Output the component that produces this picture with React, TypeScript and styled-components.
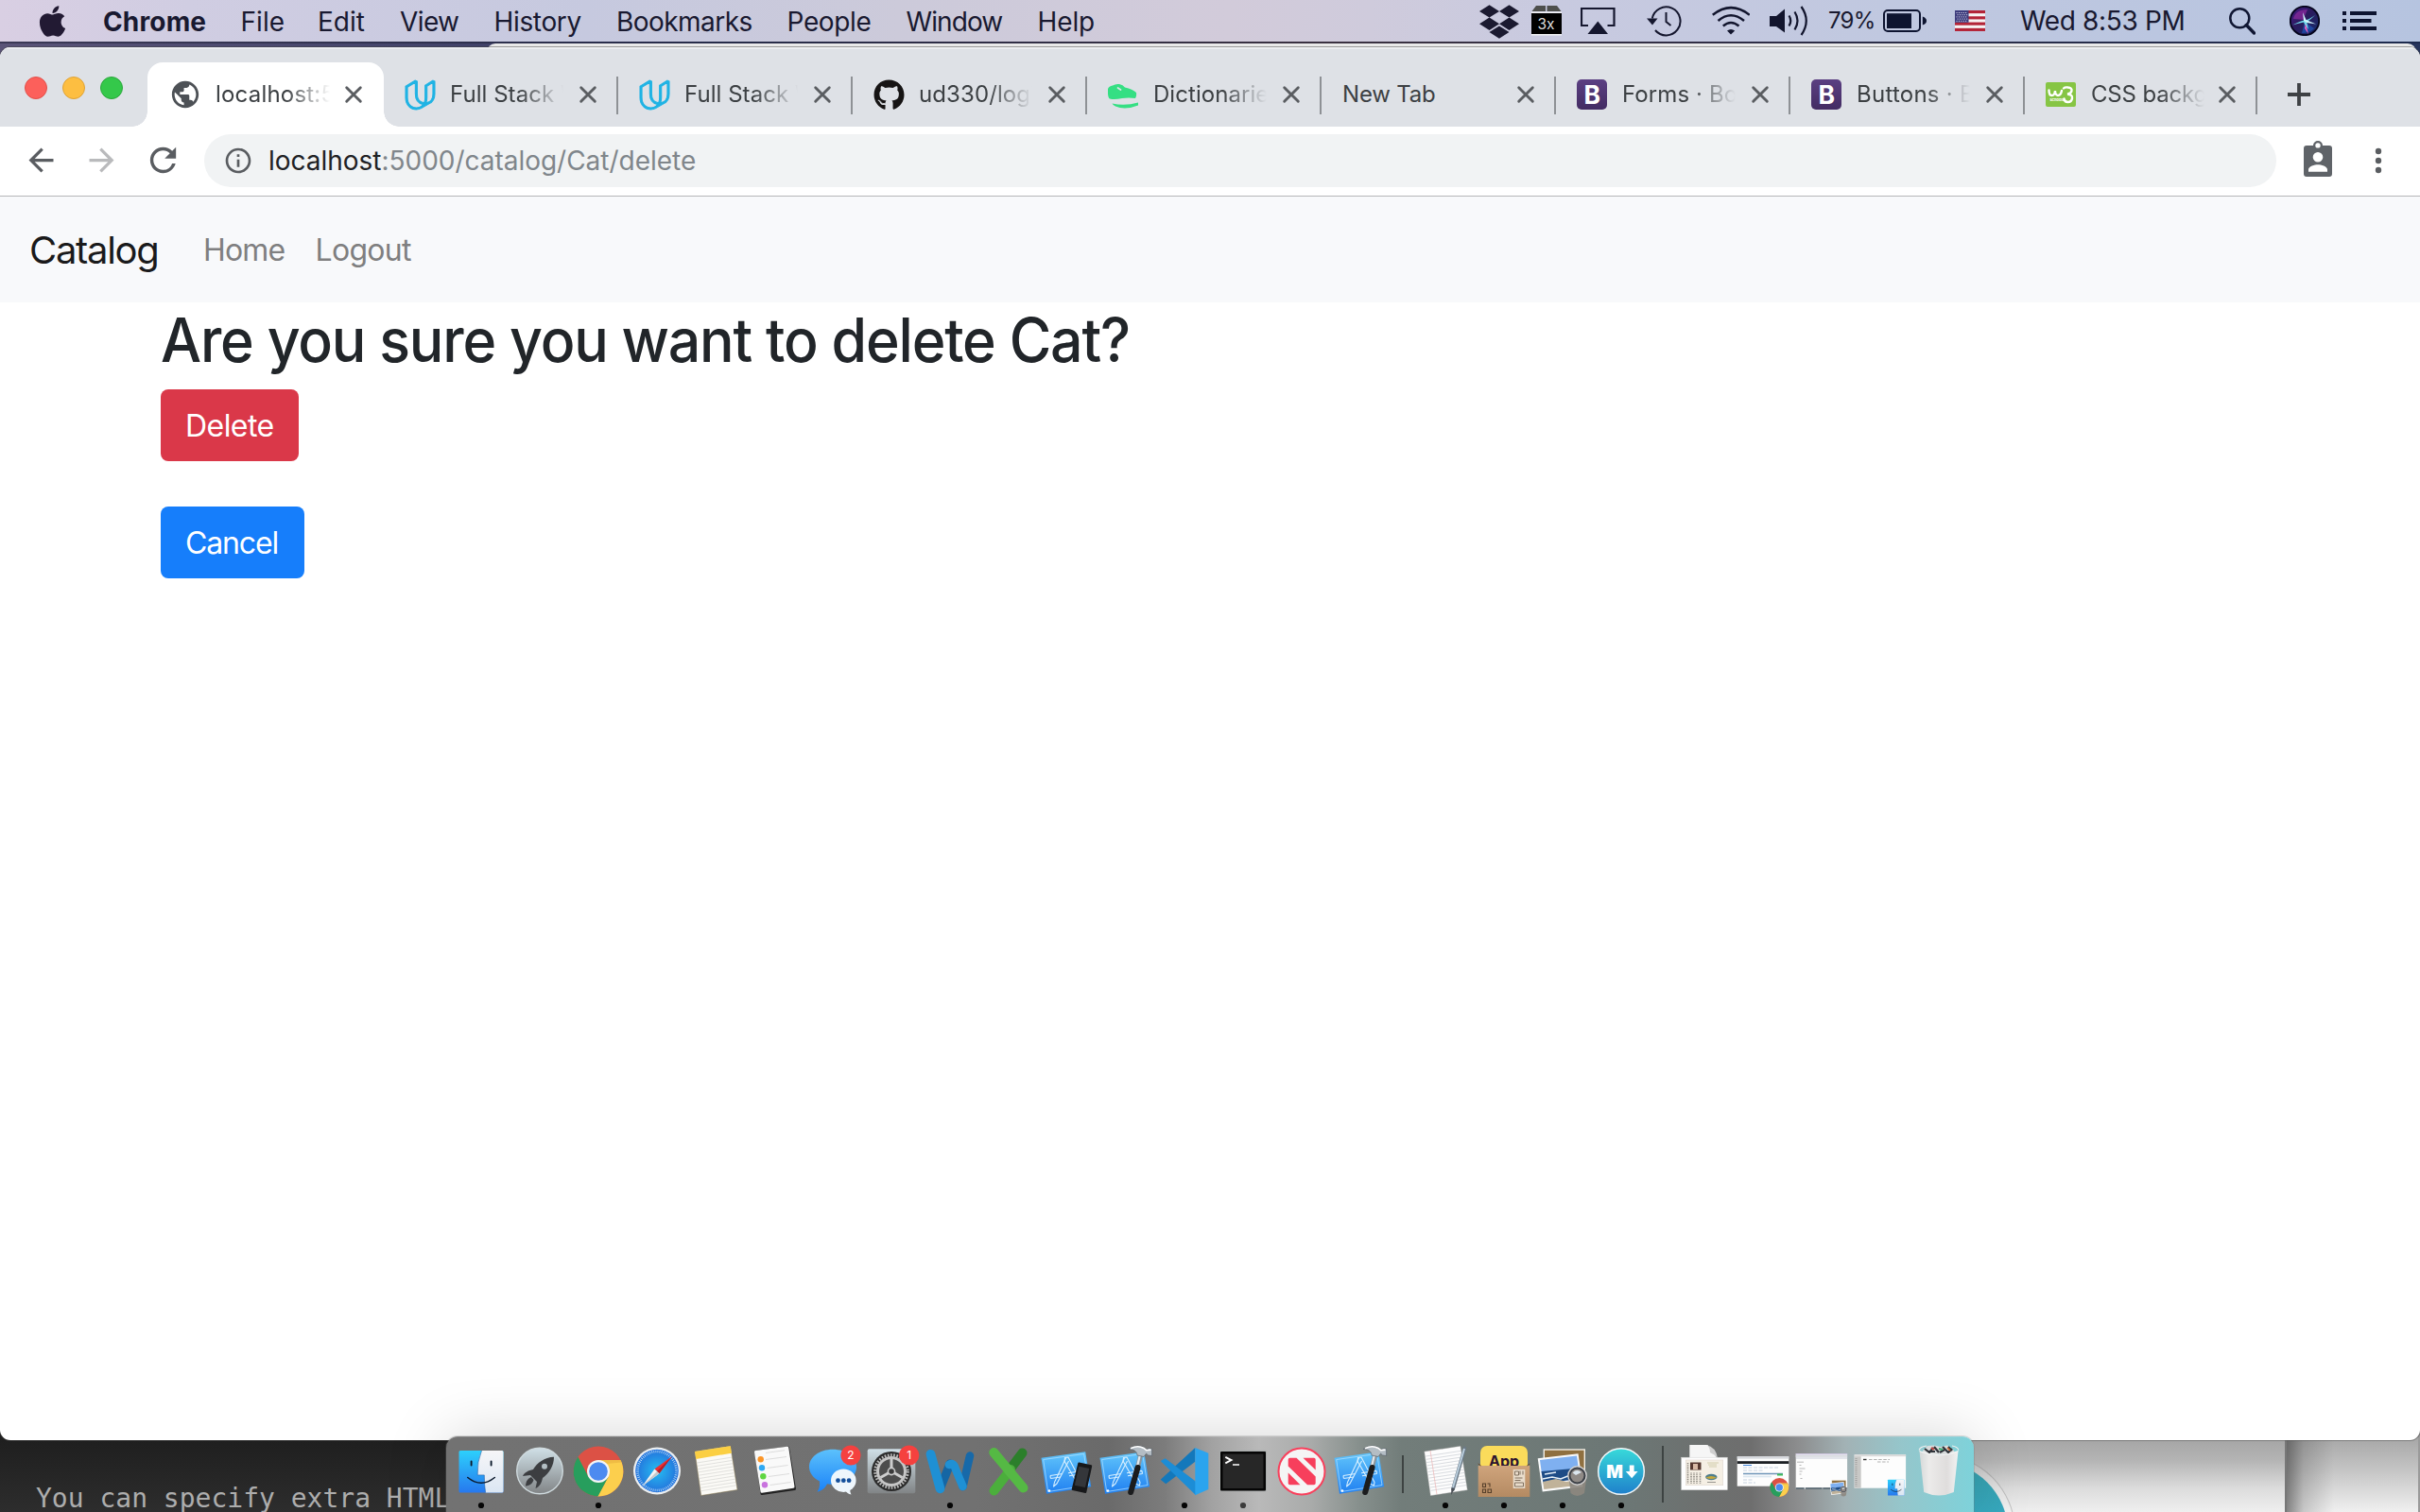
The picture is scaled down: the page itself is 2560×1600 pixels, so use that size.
import React from 'react';
import styled, { createGlobalStyle } from 'styled-components';
import { FaApple, FaDropbox, FaGithub } from 'react-icons/fa';
import { MdArrowBack, MdArrowForward, MdInfoOutline, MdPublic, MdRefresh } from 'react-icons/md';
import { SiUdacity } from 'react-icons/si';

const GlobalStyle = createGlobalStyle`
  *, *::before, *::after { box-sizing: border-box; }
  html, body { margin: 0; padding: 0; overflow: hidden; }
  body { font-family: Inter, "Liberation Sans", sans-serif; }
  svg { display: block; flex: none; }
`;

/* ---------- Desktop ---------- */

const Desktop = styled.div`
  position: relative;
  width: 2560px;
  height: 1600px;
  overflow: hidden;
  display: flex;
  flex-direction: column;
  background: linear-gradient(90deg, #5a5478 0, #3c3f66 600px, #4a3f58 1400px, #26345c 2560px);
`;

/* ---------- Menu bar ---------- */

const MenuBar = styled.header`
  flex: none;
  height: 44px;
  display: flex;
  align-items: center;
  justify-content: space-between;
  padding: 0 46px 0 43px;
  color: #191930;
  font-size: 28px;
  line-height: 44px;
  background: linear-gradient(90deg, #d9cfe3 0, #d0cde2 200px, #c6c9df 620px, #cccada 950px, #d2cbda 1300px, #cfcbdc 1450px, #c8cae0 1650px, #c0c8e0 2000px, #b6c4e0 2560px);
`;

const MenuGroup = styled.div`
  display: flex;
  align-items: center;
`;

const AppleSlot = styled.div`
  width: 66px;
  svg { margin-left: -6px; }
`;

const DropboxSlot = styled.div`
  width: 38px;
  svg { margin: 1px -2px 0; }
`;

const MenuItem = styled.span<{ $w: number; $ls?: number; $bold?: boolean }>`
  width: ${p => p.$w}px;
  padding-top: 1px;
  letter-spacing: ${p => p.$ls ?? 0}px;
  font-weight: ${p => (p.$bold ? 700 : 400)};
  white-space: nowrap;
`;

const StatusItem = styled.div<{ $w: number; $gap?: number; $size?: number; $ls?: number }>`
  width: ${p => p.$w}px;
  margin-left: ${p => p.$gap ?? 0}px;
  font-size: ${p => p.$size ?? 28}px;
  letter-spacing: ${p => p.$ls ?? 0}px;
  white-space: nowrap;
`;

/* ---------- Windows ---------- */

const BackWindowEdge = styled.div`
  position: absolute;
  left: 515px;
  top: 46px;
  width: 2041px;
  height: 30px;
  border-radius: 9px 9px 0 0;
  background: #e9e9e9;
`;

const MenuShade = styled.div`
  position: absolute;
  left: 0;
  top: 44px;
  width: 2560px;
  height: 2px;
  background: linear-gradient(90deg, #3b3956, #262b49 30%, #3a3040 55%, #1d2a4e);
`;

const BrowserWindow = styled.main`
  position: relative;
  z-index: 1;
  flex: none;
  margin-top: 6px;
  height: 1474px;
  display: flex;
  flex-direction: column;
  border-radius: 11px;
  overflow: hidden;
  background: #fff;
  box-shadow: 0 0 0 1px rgba(60, 60, 60, 0.45);
`;

const TabStrip = styled.div`
  flex: none;
  height: 84px;
  display: flex;
  align-items: flex-end;
  background: #dee1e6;
  box-shadow: inset 0 2px 0 #eceef1;
`;

const TrafficLights = styled.div`
  width: 156px;
  height: 84px;
  padding: 31px 0 0 26px;
  display: flex;
  gap: 16px;
`;

const Light = styled.i<{ $c: string; $b: string }>`
  width: 24px;
  height: 24px;
  border-radius: 50%;
  background: ${p => p.$c};
  border: 1px solid ${p => p.$b};
`;

const Tab = styled.div<{ $active?: boolean; $w?: number }>`
  position: relative;
  width: ${p => p.$w ?? 248}px;
  height: 68px;
  display: flex;
  align-items: center;
  padding-left: ${p => (p.$active ? 24 : 22)}px;
  color: #3c4043;
  background: ${p => (p.$active ? '#fff' : 'transparent')};
  border-radius: 16px 16px 0 0;

  ${p =>
    p.$active &&
    `
    &::before, &::after {
      content: '';
      position: absolute;
      bottom: 0;
      width: 16px;
      height: 16px;
    }
    &::before { left: -16px; background: radial-gradient(circle at 0 0, transparent 15.5px, #fff 16px); }
    &::after { right: -16px; background: radial-gradient(circle at 100% 0, transparent 15.5px, #fff 16px); }
  `}
`;

const Favicon = styled.span`
  width: 32px;
  height: 32px;
  margin-right: 16px;
  display: flex;
  align-items: center;
  justify-content: center;
`;

const TabTitle = styled.span<{ $ls?: number; $fade?: boolean; $w: number }>`
  width: ${p => p.$w}px;
  overflow: hidden;
  white-space: nowrap;
  font-size: 24px;
  line-height: 34px;
  letter-spacing: ${p => p.$ls ?? 0}px;
  ${p => p.$fade && 'mask-image: linear-gradient(90deg, #000 calc(100% - 48px), transparent calc(100% - 1px));'}
`;

const CloseSlot = styled.span`
  margin-left: auto;
  width: 20px;
  margin-right: 22px;
`;

const TabDivider = styled.i`
  position: absolute;
  right: 0;
  top: 15px;
  width: 2px;
  height: 40px;
  background: #8e9195;
`;

const NewTabSlot = styled.div`
  height: 68px;
  padding-left: 32px;
  display: flex;
  align-items: center;
`;

const Toolbar = styled.div`
  flex: none;
  height: 74px;
  display: flex;
  align-items: center;
  padding: 0 37px 2px 24px;
  background: #fff;
  border-bottom: 1px solid #b6b6b8;
  color: #5a5d61;
`;

const ToolButton = styled.span<{ $dim?: boolean }>`
  width: 64px;
  display: flex;
  color: ${p => (p.$dim ? '#b9babc' : '#5a5d61')};
`;

const Omnibox = styled.div`
  flex: none;
  width: 2192px;
  height: 56px;
  display: flex;
  align-items: center;
  padding-left: 20px;
  border-radius: 28px;
  background: #f1f3f4;
  color: #80868b;
  font-size: 28px;
  line-height: 56px;
`;

const Url = styled.span`
  margin-left: 16px;
  white-space: nowrap;
  letter-spacing: -0.02px;
  b { font-weight: 400; color: #202124; }
`;

const ToolbarEnd = styled.div`
  flex: 1;
  display: flex;
  align-items: center;
  justify-content: space-between;
  padding-left: 29px;
`;

/* ---------- Page ---------- */

const Navbar = styled.nav`
  flex: none;
  height: 112px;
  display: flex;
  align-items: center;
  padding-left: 31px;
  background: #f8f9fb;
`;

const Brand = styled.a`
  width: 184px;
  padding-top: 1px;
  font-size: 40px;
  line-height: 60px;
  letter-spacing: -1.3px;
  color: #1a1a1b;
`;

const NavLink = styled.a<{ $w: number; $ls: number }>`
  width: ${p => p.$w}px;
  padding-top: 2px;
  font-size: 32px;
  line-height: 48px;
  letter-spacing: ${p => p.$ls}px;
  color: #7f7f80;
`;

const Container = styled.section`
  display: flex;
  flex-direction: column;
  align-items: flex-start;
  padding-left: 170px;
`;

const Heading = styled.h1`
  margin: 0 0 14px;
  padding-top: 2px;
  font-size: 64px;
  line-height: 76px;
  font-weight: 500;
  letter-spacing: -1.24px;
  transform: scaleX(0.95);
  transform-origin: 0 0;
  white-space: nowrap;
  color: #212529;
`;

const Button = styled.button<{ $color: string; $w: number; $ls: number }>`
  width: ${p => p.$w}px;
  height: 76px;
  margin: 0 0 48px;
  padding: 1px 0 0 26px;
  border: 0;
  border-radius: 8px;
  background: ${p => p.$color};
  color: #fff;
  font: 400 32px/75px Inter, sans-serif;
  letter-spacing: ${p => p.$ls}px;
  text-align: left;
`;

/* ---------- Windows below the browser ---------- */

const LowerLeft = styled.div`
  position: absolute;
  left: 0;
  top: 1500px;
  width: 2100px;
  height: 100px;
  padding: 67px 0 0 38px;
  overflow: hidden;
  background: linear-gradient(180deg, #1f1f1f 24px, #2d2d2d 100px);
  color: #adadad;
  font: 28px/38px "DejaVu Sans Mono", monospace;
  white-space: nowrap;
`;

const LowerRight = styled.div`
  position: absolute;
  left: 2080px;
  top: 1500px;
  width: 337px;
  height: 100px;
  overflow: hidden;
  background: linear-gradient(180deg, #a6a6a6 24px, #b4b4b4 45px, #dcdcdc 75px, #efefef 100px);
`;

const TealDisc = styled.div`
  position: absolute;
  left: -112px;
  top: 39px;
  width: 164px;
  height: 164px;
  border-radius: 50%;
  border: 1px solid rgba(110, 110, 110, 0.35);
  padding: 7px;
  background: rgba(255, 255, 255, 0.2);
  &::before {
    content: '';
    display: block;
    width: 148px;
    height: 148px;
    border-radius: 50%;
    background: linear-gradient(180deg, #35a0ac, #37a9c0 40%);
  }
`;

const FarRight = styled.div`
  position: absolute;
  left: 2417px;
  top: 1500px;
  width: 143px;
  height: 100px;
  border-left: 2px solid #777;
  border-right: 2px solid #9a9a9a;
  background:
    linear-gradient(90deg, rgba(60, 60, 60, 0.6), rgba(60, 60, 60, 0.22) 18px, transparent 50px),
    linear-gradient(180deg, #a9a9a9 24px, #c4c4c4 55px, #f0f0f0 100px);
`;

/* ---------- Dock ---------- */

const DockBar = styled.footer`
  position: absolute;
  z-index: 2;
  left: 472px;
  top: 1520px;
  width: 1616px;
  height: 80px;
  padding: 0 6px;
  display: flex;
  border-radius: 12px 12px 0 0;
  background: linear-gradient(90deg, #727272 0, #717171 560px, #6a6a6a 700px, #7c7c7c 760px, #a2a2a2 810px, #b9b9b9 860px, #a9abaa 915px, #87908d 965px, #727d7a 1010px, #6c7775 1250px, #6d706f 1330px, #6e6e6e 1380px, #8c8d8e 1430px, #a2b2b5 1480px, #95c6cb 1540px, #7ed2da 1616px);
  box-shadow: 0 0 0 1px rgba(120, 120, 120, 0.25), 0 0 64px rgba(0, 0, 0, 0.17), inset 0 1px 0 rgba(255, 255, 255, 0.12);
`;

const Divider = styled.i<{ $h: number; $w: number }>`
  width: ${p => p.$w}px;
  height: 80px;
  display: flex;
  align-items: center;
  justify-content: center;
  &::before {
    content: '';
    width: 2px;
    height: ${p => p.$h}px;
    background: #3d4342;
  }
`;

/* Every dock tile draws around its own centre. */
function Tile({ children, running, soft }: { children: React.ReactNode; running?: boolean; soft?: boolean }) {
  return (
    <svg width="62" height="80" viewBox="-31 -37 62 80">
      {children}
      {running && <circle cx="0" cy="36" r="3.1" fill={soft ? '#3c3c3c' : '#050505'} />}
    </svg>
  );
}

const Finder = () => (
  <g>
    <rect x="-23.5" y="-22" width="47" height="44.5" rx="1.5" fill="url(#finderBlue)" />
    <path d="M.5-22H22a1.500 1.500 0 0 1 1.500 1.500V21a1.500 1.500 0 0 1-1.500 1.500H4.600Q3.200 14 3.300 3.900H-3.800Q-4.500-10 .5-22Z" fill="url(#finderWhite)" />
    <path d="M.5-22Q-4.500-10-3.800 3.900H3.300Q3.200 14 4.600 22.500" fill="none" stroke="#1b5ca8" strokeWidth=".6" />
    <path d="M-10.400-10.500v4M10.600-10.500v4" stroke="#0c1a2c" strokeWidth="1.900" strokeLinecap="round" />
    <path d="M-14.200 6.500Q0 18 14.300 6.500" fill="none" stroke="#0c1a2c" strokeWidth="1.600" strokeLinecap="round" />
  </g>
);

const Launchpad = () => (
  <g>
    <circle cy="-.5" r="24.300" fill="url(#silver)" stroke="#cfdade" strokeWidth="1.400" />
    <path d="M15-15.300C5-15-3-9-7-2-12-1-16 1-18 5l8-1 7 7-1.500 7C0 16 2 12 3 7 10 2 15-6 15-15.300Z" fill="#3c3e41" />
    <path d="M-15 15.500C-14.500 10-13 8-9 6l2.500 3C-8 13-10 15-15 15.500Z" fill="#3c3e41" />
    <circle cx="5" cy="-5.300" r="3" fill="#b3bec3" />
  </g>
);

const ChromeMark = () => (
  <g>
    <circle r="26.400" fill="#dc5145" />
    <path d="M0-12H23.500A26.400 26.400 0 0 1-1 26.400L10.400 6Z" fill="#fccf4d" />
    <path d="M-21.500-15.300A26.400 26.400 0 0 0-.500 26.400L10.400 6H-10.400Z" fill="#279e5d" />
    <path d="M0-12H23.500L24.500-9.500 8-8Z" fill="#e3a93b" opacity=".5" />
    <circle r="12" fill="#f5f5f5" />
    <circle r="9.800" fill="#4c8bf0" />
  </g>
);

const Safari = () => (
  <g>
    <circle cy="-.5" r="25" fill="#eceff1" />
    <circle cy="-.5" r="22.800" fill="url(#safariBlue)" />
    <circle cy="-.5" r="20.500" fill="none" stroke="#cfe9fb" strokeWidth="2.600" strokeDasharray=".7 1.400" />
    <path d="M16-16 2.400 2.200-2.600-2.400Z" fill="#ee2f33" />
    <path d="M-15.500 15.500-2.600-2.400 2.400 2.200Z" fill="#f4f4f4" />
    <path d="M16-16 0 0 2.400 2.200Z" fill="#b51f27" />
    <path d="M-15.500 15.500 0 0 2.400 2.200Z" fill="#c5c9cc" />
  </g>
);

const lines = (n: number, x1: number, y1: number, w: number, rise: number, dx: number, dy: number) =>
  Array.from({ length: n }, (_, i) => `M${x1 + i * dx} ${y1 + i * dy}l${w} ${-rise}`).join('');

const Notes = () => (
  <g>
    <path d="M-22-21 15.700-26.800 23 19.500-15.300 25.500Z" fill="#fbfaf6" stroke="#8a7a50" strokeWidth=".5" />
    <path d="M-22-21 15.700-26.800 16.900-19.300-20.700-13Z" fill="#fbcf42" />
    <path d={lines(10, -19.800, -9, 37, 5.900, 0.500, 3.300)} stroke="#d6d6d2" strokeWidth=".7" />
  </g>
);

const Reminders = () => (
  <g>
    <path d="M-19-20.500 14.500-24.800 21.500 18.500-13 23.500Z" fill="#222" stroke="#222" strokeWidth="3" strokeLinejoin="round" />
    <path d="M-19.500-20.500 13.800-24.800 20 16.300-13 21.300Z" fill="#f9f9f9" stroke="#f9f9f9" strokeWidth="3" strokeLinejoin="round" />
    <circle cx="-14.300" cy="-12.700" r="3.200" fill="#fb9526" />
    <circle cx="-13" cy="-3.700" r="3.200" fill="#2fa9f3" />
    <circle cx="-11.700" cy="5.300" r="3.200" fill="#5fd642" />
    <circle cx="-10" cy="14.300" r="3.200" fill="#c973de" />
    <path d="M-9-19.500 11-22.300M-9-12.500l22-3M-7.500-3.500l22-3M-6 5.500l22-3M-4.500 14.500l22-3" stroke="#d4d4d4" strokeWidth=".8" />
  </g>
);

const Badge = ({ x, children }: { x: number; children: string }) => (
  <g>
    <circle cx={x} cy="-17" r="10.600" fill="#f5413f" />
    <text x={x} y="-12.700" fill="#fff" fontSize="12" fontFamily="Inter, sans-serif" textAnchor="middle">{children}</text>
  </g>
);

const Messages = () => (
  <g>
    <path d="M0-23.300C14.500-23.300 25-15 25-4.700S14.500 13.700 0 13.700c-2 0-4 0-6-.5-2 4.500-6 7.500-10.500 8.300 2-2.500 3-6 2.500-11C-21 7-25 1.500-25-4.700-25-15-14.500-23.300 0-23.300Z" fill="url(#bubble)" />
    <ellipse cx="11.300" cy="9.700" rx="13.300" ry="12.200" fill="#eef6fc" />
    <path d="M13 20c1.500 2.500 3.500 4 6.500 4.500-1-2-1.500-4-1-6Z" fill="#eef6fc" />
    <g fill="#15509c"><circle cx="5.500" cy="9.700" r="2.400" /><circle cx="11.300" cy="9.700" r="2.400" /><circle cx="17.100" cy="9.700" r="2.400" /></g>
    <Badge x={19}>2</Badge>
  </g>
);

const SystemPreferences = () => (
  <g>
    <rect x="-25.300" y="-23.700" width="50.600" height="47" rx="2" fill="url(#silver)" />
    <circle r="21" fill="#2b2b2b" />
    <circle r="17.300" fill="none" stroke="#b9b9b9" strokeWidth="3" strokeDasharray="1.700 1.500" />
    <circle r="14.500" fill="#4d4d4d" stroke="#c6c6c6" strokeWidth="3" />
    <path d="M0 0V-13M0 0 11.500 6.500M0 0-11.500 6.500" stroke="#cdcdcd" strokeWidth="3" />
    <circle r="3.600" fill="#3a3a3a" stroke="#cdcdcd" strokeWidth="1.600" />
    <Badge x={18.700}>1</Badge>
  </g>
);

const Word = () => (
  <g fill="none" strokeLinecap="round" strokeLinejoin="round">
    <path d="M21-16.500 13.500 16" stroke="#1769a9" strokeWidth="8.500" />
    <path d="M-10.500 18 0-8" stroke="#1566a4" strokeWidth="9" />
    <path d="M-20.500-18.200-10.500 18.300" stroke="#1f90d4" strokeWidth="9.800" />
    <path d="M-1-7Q4-10 6-2L13.500 16" stroke="#1f90d4" strokeWidth="8.500" />
  </g>
);

const Excel = () => (
  <g fill="none" strokeLinecap="round">
    <path d="M14.500-19.500 2-3" stroke="#2c7f2b" strokeWidth="10" />
    <path d="M-15.500 20.500 2-2" stroke="#4bae3c" strokeWidth="10" />
    <path d="M-15.700-20 15.500 17.500" stroke="#55b944" strokeWidth="10" />
  </g>
);

const Blueprint = () => (
  <g>
    <path d="M-27.500-14.300 19.200-20.700 25.200 16.300-22 23.800Z" fill="url(#blueprint)" />
    <path d="M-25.300-12.500 17.600-18.500 23 14.500-20.300 21.500Z" fill="none" stroke="#b5e2ff" strokeWidth=".7" />
    <g fill="none" stroke="#d8f0ff" strokeWidth="1.100" strokeLinejoin="round">
      <path d="M-2.500-14.500 1-15 15 11.500 14.500 15 11 13.500-3-11Z" />
      <path d="M-1.500-14-13.500 11.500-14.500 16-11 13 1.500-11" />
      <path d="M-18 4.500-5 2.500M1 1.800 17-.600M-17.600 7.500-7 6M2 4.700 17.500 2.500M-18 4.500l.4 3M17-.6l.5 3.100" />
    </g>
    <circle cx="-19" cy="20.500" r="1.300" fill="#fff" />
  </g>
);

const Simulator = () => (
  <g>
    <Blueprint />
    <path d="M12.300-8.500 25.200-5.700 19.300 22 5.700 19Z" fill="#17181a" stroke="#17181a" strokeWidth="2" strokeLinejoin="round" />
    <path d="M12.300-5.300 23.300-2.900 19 17 7.800 14.700Z" fill="#34363a" />
  </g>
);

const Xcode = () => (
  <g>
    <Blueprint />
    <path d="M15.800-18 12.500-4" stroke="#8a949b" strokeWidth="5" />
    <path d="M15-18 12-5" stroke="#e2e8ec" strokeWidth="2.200" />
    <path d="M12.500-4 5.200 22" stroke="#1b1c1e" strokeWidth="6" strokeLinecap="round" />
    <path d="M3-23.500C8-27.300 15-27.800 19.500-25.300l2.500 2.300 2-1.200 3.600.5V-16.500l-4-.5-2-1.800-2.600 3.300-7-1.500C11.500-21.500 8.500-23.300 3-23.500Z" fill="#b4bdc4" stroke="#59626a" strokeWidth=".7" />
    <path d="M5-24.200C10-26.700 15-26.700 19-24.500l2.700 2.200 4.800-.6" fill="none" stroke="#fff" strokeWidth="1.600" />
  </g>
);

const VSCode = () => (
  <g>
    <path d="M11.300-25-25.300 8.700-19.700 13.300 11.300-10.300Z" fill="#1378bb" />
    <path d="M-25.300-11-20.300-13.700 12 10.700V25.200Z" fill="#1c8dd6" />
    <path d="M11.300-25 25.300-19.300V19L11.300 25.200Z" fill="#2ba4ee" />
  </g>
);

const TerminalMark = () => (
  <g>
    <rect x="-25" y="-22.200" width="50" height="43.500" rx="2" fill="#a9adac" />
    <rect x="-24" y="-21" width="48" height="41.500" rx="1" fill="#050505" />
    <rect x="-21.500" y="-18.500" width="43" height="36.500" fill="#272727" />
    <path d="M-18.700-15.200l6.200 3.300-6.200 3.300" fill="none" stroke="#fff" strokeWidth="1.900" />
    <path d="M-11-7h7" stroke="#fff" strokeWidth="1.500" />
  </g>
);

const News = () => (
  <g>
    <circle r="24.500" fill="#f5f5f5" stroke="#f8405c" strokeWidth="2" />
    <path d="M-14.300-12.500Q-14.300-14.300-12.500-14.300H-5.500L14.700 5.500V12.500Q14.700 14.300 13 14.300H6L-14.300-5.500ZM1.500-14.300H13Q14.700-14.300 14.700-12.500V-1.500ZM-14.300 1.500V12.500Q-14.300 14.300-12.500 14.300H-1.500Z" fill="#f73f5c" />
  </g>
);

const TextEdit = () => (
  <g>
    <path d="M-22.300-21 16-26.800 23.300 19.700-15.700 25.700Z" fill="#fdfdfd" stroke="#999" strokeWidth=".4" />
    <path d={lines(12, -20.800, -16, 37.500, 5.700, 0.500, 3.300)} stroke="#c8cdd2" strokeWidth=".7" />
    <path d="M-16-22-9 24.500" stroke="#eba7a7" strokeWidth=".6" />
    <path d="M20.500-24.500 8 19" stroke="#6c7a86" strokeWidth="3.800" strokeLinecap="round" />
    <path d="M20-24 8 17" stroke="#b9cddc" strokeWidth="2" />
    <path d="M6.500 17.500l3.500 1L6 25Z" fill="#4a4f55" />
  </g>
);

const AppBox = () => (
  <g>
    <rect x="-25" y="-27" width="50" height="30" rx="7" fill="#fadb5b" />
    <text x="0" y="-4.700" textAnchor="middle" fontFamily="Inter, sans-serif" fontWeight="700" fontSize="16" fill="#2b1430">App</text>
    <path d="M-27.300-6H27.300V27H-27.300Z" fill="url(#carton)" />
    <path d="M-27.300-8l3 2M27.300-8l-3 2" stroke="#6d4b2b" strokeWidth="1" />
    <rect x="9.700" y="-2" width="12.600" height="20" fill="#e9dccb" />
    <path d="M11.500 0h4v4h-4ZM17-.5v4M20-.5v4M11.500 7h8M11.500 9.500h6M11.500 12h9v4h-9Z" stroke="#756555" strokeWidth=".9" fill="none" />
    <path d="M-22.500 13h3v3.500h-3ZM-17.500 13h2.500v3.500M-22.500 19h3v3.500h-3ZM-17 19h3.500v3.500H-17Z" stroke="#57402b" strokeWidth="1.100" fill="none" />
  </g>
);

const PreviewMark = () => (
  <g>
    <rect x="-19.700" y="-23" width="43" height="33" fill="#8f7040" stroke="#f3efe6" strokeWidth="1.400" />
    <path d="M-26.300-13.700 16.500-18.700 21.500 16.300-21.300 21.500Z" fill="#fafafa" />
    <path d="M-24-11.900 15-16.500 17-2-22.200 1.800Z" fill="#7fb0f0" />
    <path d="M-22.500 0 16.800-3.500 18.600 8-20.500 12.500Z" fill="#1e4c86" />
    <path d="M-20.900 11-7 8 4 11 18.600 8 19.500 14.500-19.700 19Z" fill="#c0b299" />
    <path d="M-21 8l10-2 9 2 10-4M-19 3l12-2" stroke="#e6f0f8" strokeWidth="1.600" fill="none" />
    <path d="M6.500 6 8.500 23Q15.300 29 23 23L25.500 6Z" fill="#8d8780" opacity=".9" />
    <circle cx="15.500" cy="4.500" r="9.700" fill="#3b3f46" stroke="#d0d0d0" strokeWidth="1.400" />
    <circle cx="15.500" cy="4.500" r="7" fill="#8f8a86" />
    <path d="M10.500 1.500Q15-3 20 1L14 4Z" fill="#dbe6ee" />
  </g>
);

const MacDown = () => (
  <g>
    <circle r="24.300" fill="url(#macdown)" stroke="#f4f8f9" strokeWidth="1.500" />
    <text x="-6.900" y="6.900" textAnchor="middle" fontFamily="Inter, sans-serif" fontWeight="900" fontSize="18.500" fill="#fff">M</text>
    <path d="M8.800-6.500h4.800V0h4L11.200 7.300 4.800 0h4Z" fill="#fff" />
  </g>
);

const Documents = () => (
  <g>
    <path d="M-15.700-28H3.500L13.700-14H-15.700Z" fill="#f6f6f6" />
    <path d="M2-28Q6-26 6-20 11-18 14-14Q12-26 2-28Z" fill="#cfcfcf" />
    <rect x="-24.300" y="-14.800" width="48.600" height="34.500" fill="#fefefe" stroke="#d0d0d0" strokeWidth=".5" />
    <rect x="-19.700" y="-12" width="39.400" height="26.700" fill="#f5efe4" stroke="#e0d5d0" strokeWidth=".6" />
    <rect x="-15" y="-9.500" width="11.500" height="8" fill="#57382f" />
    <rect x="-12" y="-8" width="5" height="6" fill="#d9b9a4" />
    <path d="M-17.500-9V13M-14 1.500v12M-11 1.500v12M-8 1.500v12M-4.500 1.500v12" stroke="#8b8780" strokeWidth="1.600" strokeDasharray="1 .7" />
    <path d="M3-9H15M4-7H13M5-5H13" stroke="#c9c59c" strokeWidth=".8" />
    <ellipse cx="7.300" cy="6" rx="6.200" ry="3.300" fill="#4d7d8d" />
    <path d="M1.500 6.500Q7 3.500 13 6.500 7 9.500 1.500 6.500Z" fill="#c7a83a" />
    <path d="M3 11.500H12" stroke="#8d8a84" strokeWidth=".9" />
  </g>
);

const MiniBrowser = () => (
  <g>
    <rect x="-27.300" y="-15.800" width="54.600" height="31.500" fill="#fdfdfd" />
    <rect x="-27.300" y="-15.800" width="54.600" height="2.400" fill="#d5d8dd" />
    <rect x="-27.300" y="-10.800" width="54.600" height="2.800" fill="#1d2024" />
    <path d="M-21-6.500h9" stroke="#3f82d8" strokeWidth="1" />
    <path d="M-21-4h38M-21-1h22M-21 9h10M-21 12h13" stroke="#b9c6d8" strokeWidth=".8" strokeDasharray="4 1.500" />
    <path d="M-21 2.500h42" stroke="#6f95b8" strokeWidth="1.400" />
    <rect x="15" y="2.500" width="6" height="2" fill="#3dbb57" />
    <path d="M-21 5.500h30" stroke="#dbe7f0" strokeWidth="1.600" />
    <g transform="translate(17.300 17) scale(.375)"><ChromeMark /></g>
  </g>
);

const MiniPreview = () => (
  <g>
    <rect x="-27.300" y="-18.800" width="54.400" height="37.500" fill="#fdfdfd" />
    <rect x="-27.300" y="-18.800" width="54.400" height="1.200" fill="#c9bfdc" />
    <rect x="-27.300" y="-17.200" width="54.400" height="2" fill="#d8dbe0" />
    <path d="M-27-14h54" stroke="#b2b7c8" strokeWidth=".7" />
    <path d="M-26-9.800h7M-23.500-6.500h2M-23.500-3h6M-23.500 0h3M-23.500 3h2M-22.500 7.500h2" stroke="#999" strokeWidth=".7" />
    <path d="M-27.300 18h54.400" stroke="#3b4c58" strokeWidth="1.500" strokeDasharray="9 1 18 .5" />
    <g transform="translate(17.700 17.500) scale(.35)"><PreviewMark /></g>
  </g>
);

const MiniFinder = () => (
  <g>
    <rect x="-27.300" y="-17.800" width="54.400" height="35.500" fill="#fdfdfd" />
    <rect x="-27.300" y="-17.800" width="54.400" height="2" fill="#d9d9d9" />
    <rect x="-27.300" y="-15.800" width="7" height="33.500" fill="#c8c8c6" />
    <path d="M-25.500-14v30" stroke="#9b9b9b" strokeWidth="2" strokeDasharray=".8 1.300" />
    <path d="M-18-12.500h3.500" stroke="#333" strokeWidth="1.400" />
    <path d="M-12-12.500H10M-3-10H9" stroke="#a9a9a9" strokeWidth=".9" strokeDasharray="3.500 1.600" />
    <g transform="translate(16.800 17) scale(.375)"><Finder /></g>
  </g>
);

const Trash = () => (
  <g>
    <path d="M-17-22-12-27-5-27.500 2-26 9-27.500 16-22 17-18H-16Z" fill="#d9dcdc" />
    <path d="M-15-24l5 4 4-5M-5-26l5 6M4-26l6 6 4-4M-11-21h7M1-20l5-3M10-26l4 4" stroke="#30343a" strokeWidth="2.200" fill="none" />
    <path d="M-8-25l3 2" stroke="#c9473f" strokeWidth="2" />
    <path d="M0-24l4 1" stroke="#39a76b" strokeWidth="2" />
    <path d="M9-25l3 3" stroke="#d0662e" strokeWidth="1.600" />
    <path d="M-20.500-21.500Q0-13 20.500-21.500L15.800 22Q0 29-15.800 22Z" fill="url(#bin)" />
    <path d="M-20.500-21.500Q0-13 20.500-21.500" fill="none" stroke="#f6f6f6" strokeWidth="1.200" />
    <path d="M-20.800-22.500Q-20-26-13-27M20.800-22.500Q20-26 14-27" fill="none" stroke="#eee" strokeWidth="1.200" />
  </g>
);

const DefsSvg = styled.svg`
  position: absolute;
  width: 0;
  height: 0;
`;

const Gradients = () => (
  <DefsSvg>
    <defs>
      <linearGradient id="finderBlue" x2="0" y2="1"><stop stopColor="#2dd0fc" /><stop offset="1" stopColor="#2778ee" /></linearGradient>
      <linearGradient id="finderWhite" x2="0" y2="1"><stop stopColor="#f6f6f8" /><stop offset="1" stopColor="#dbe6f3" /></linearGradient>
      <linearGradient id="silver" x2="0" y2="1"><stop stopColor="#d0e0e7" /><stop offset="1" stopColor="#818486" /></linearGradient>
      <radialGradient id="safariBlue"><stop stopColor="#25bdf1" /><stop offset="1" stopColor="#2472dc" /></radialGradient>
      <linearGradient id="bubble" x2="0" y2="1"><stop stopColor="#5cc1fc" /><stop offset="1" stopColor="#1b83f8" /></linearGradient>
      <linearGradient id="blueprint" x2="0" y2="1"><stop stopColor="#62c6fb" /><stop offset="1" stopColor="#1f7ff1" /></linearGradient>
      <linearGradient id="carton" x2="0" y2="1"><stop stopColor="#cfa47c" /><stop offset="1" stopColor="#b48a62" /></linearGradient>
      <linearGradient id="macdown" x2="0" y2="1"><stop stopColor="#38dada" /><stop offset="1" stopColor="#1f80cb" /></linearGradient>
      <linearGradient id="bin" x2="1" y2="0"><stop stopColor="#d5d9d9" /><stop offset=".25" stopColor="#ecebea" /><stop offset=".7" stopColor="#dfdddc" /><stop offset="1" stopColor="#f2f2f2" /></linearGradient>
      <linearGradient id="purple" x2="0" y2="1"><stop stopColor="#5b3f82" /><stop offset="1" stopColor="#432c63" /></linearGradient>
      <linearGradient id="siri" x2="1" y2="1"><stop stopColor="#4a1c8c" /><stop offset=".45" stopColor="#2a1a5c" /><stop offset="1" stopColor="#15306e" /></linearGradient>
    </defs>
  </DefsSvg>
);

/* ---------- Favicons and status glyphs ---------- */

const Rex = () => (
  <svg width="32" height="32" viewBox="0 0 32 32">
    <path d="M0 10Q1 7 5 6.500 8 4.500 12 5q4 .5 6 3.500 8 1.500 12 5.500.5 4-1 6-7-1-14 0-8 1.800-13 .5Q-.5 19 0 10Z" fill="#35df83" />
    <path d="M4.500 25.500Q18 28.500 32 24.500v3Q18 33 8 28.500 5 27 4.500 25.500Z" fill="#35df83" />
    <path d="M10.500 9l3 2" stroke="#dee1e6" strokeWidth="1.800" strokeLinecap="round" />
  </svg>
);

const Bootstrap = () => (
  <svg width="32" height="32" viewBox="0 0 32 32">
    <rect width="32" height="32" rx="5" fill="url(#purple)" />
    <text x="16.300" y="25.500" textAnchor="middle" fontFamily="Inter, sans-serif" fontWeight="700" fontSize="26.500" fill="#fff">B</text>
  </svg>
);

const W3 = () => (
  <svg width="32" height="26" viewBox="0 0 32 26">
    <rect width="32" height="26" rx="2" fill="#86c544" />
    <path d="M3.500 8.500Q3.500 14 6.500 14T10 9q0 5 3 5t4-5" fill="none" stroke="#fff" strokeWidth="2.400" strokeLinecap="round" />
    <path d="M19 6.500Q20.500 5 23.500 5.500 28 6 27.500 9 27 12 23 12.500 28.500 13 28 17 27.500 21 23.500 21 20 21 19.500 17.500" fill="none" stroke="#fff" strokeWidth="2.400" strokeLinecap="round" />
    <text x="4.500" y="19.500" fontFamily="Inter, sans-serif" fontWeight="700" fontSize="4" fill="#fff">schools</text>
  </svg>
);

const CloseIcon = () => (
  <svg width="20" height="20" viewBox="-10 -10 20 20">
    <path d="M-7.300-7.300 7.300 7.300M7.300-7.300-7.300 7.300" stroke="#5a5d61" strokeWidth="2.900" strokeLinecap="round" />
  </svg>
);

const GuestBadge = () => (
  <svg width="30" height="42" viewBox="0 0 30 42">
    <path fillRule="evenodd" fill="#5f6368" d="M3 5H10A5 5 0 0 1 20 5H27A3 3 0 0 1 30 8V35A3 3 0 0 1 27 38H3A3 3 0 0 1 0 35V8A3 3 0 0 1 3 5ZM15 2.200A2.700 2.700 0 1 0 15 7.600A2.700 2.700 0 1 0 15 2.200ZM15 12A5.300 5.300 0 1 0 15 22.600A5.300 5.300 0 1 0 15 12ZM5 32.800H25V30.500C25 27 18.500 25.200 15 25.200S5 27 5 30.500Z" />
  </svg>
);

const BoxStatus = () => (
  <svg width="32" height="44" viewBox="0 0 32 44">
    <path d="M5 6H15V12H0.500ZM16.500 6H27L31.500 12H16.500Z" fill="#4e4f4c" />
    <path d="M0 12.500h32v1.500H0ZM0 36h32v1.500H0Z" fill="#f1f1f4" />
    <rect y="14" width="32" height="22" />
    <text x="15.500" y="30.500" textAnchor="middle" fontFamily="Inter, sans-serif" fontSize="15.500" fill="#ddd">3x</text>
  </svg>
);

const AirPlay = () => (
  <svg width="37" height="44" viewBox="0 0 37 44">
    <path d="M8 27H1V9H35.500V27H28.500" fill="none" stroke="#15172e" strokeWidth="2.200" />
    <path d="M18.300 22.500 29 36H7.500Z" fill="#15172e" />
  </svg>
);

const TimeMachine = () => (
  <svg width="37" height="44" viewBox="0 0 37 44">
    <path d="M5.800 19.500A15 15 0 1 1 9 32" fill="none" stroke="#15172e" strokeWidth="2" />
    <path d="M0 19.500H11.500L6 26.500Z" fill="#15172e" />
    <path d="M20.500 13V23L25.500 27" fill="none" stroke="#15172e" strokeWidth="2" />
  </svg>
);

const Wifi = () => (
  <svg width="40" height="44" viewBox="0 0 40 44">
    <g fill="none" stroke="#12152d" strokeWidth="2.500">
      <path d="M.8 15.800Q20 .5 39.800 15.800M6.500 22Q20 10.500 34 22M11.800 27.500Q20 20.500 28.500 27.500" />
    </g>
    <path d="M16 32.500Q20 29.500 24.200 32.500L20 36.500Z" fill="#12152d" />
  </svg>
);

const Volume = () => (
  <svg width="42" height="44" viewBox="0 0 42 44">
    <path d="M0 17H7L16 9.500V34.500L7 28H0Z" fill="#12152d" />
    <path d="M20.500 16.500Q24 22 20.500 27.500M26.500 12.500Q32.500 22 26.500 31.500M33.500 7Q44 22 33.500 37" fill="none" stroke="#12152d" strokeWidth="2.200" />
  </svg>
);

const Battery = () => (
  <svg width="46" height="44" viewBox="0 0 46 44">
    <rect x="1" y="11" width="38" height="22" rx="4" fill="none" stroke="#0d1430" strokeWidth="2" />
    <rect x="4" y="14.200" width="26" height="15.800" fill="#0d1430" />
    <path d="M41.800 17.500Q46 19 46 22T41.800 26.500Z" fill="#0d1430" />
  </svg>
);

const Flag = () => (
  <svg width="32" height="44" viewBox="0 0 32 44">
    <rect y="11" width="32" height="22" fill="#f6f3f3" />
    {[0, 2, 4, 6].map(i => <rect key={i} y={11 + i * 3.140} width="32" height="3.140" fill="#b32438" />)}
    <rect y="11" width="14.500" height="12.800" fill="#3d3c7d" />
    <path d="M1.500 13.500h12M2.500 15.700h11M1.500 17.900h12M2.500 20.100h11M1.500 22.300h12" stroke="#d5d5e8" strokeWidth="1" strokeDasharray="1.100 1.300" />
  </svg>
);

const Search = () => (
  <svg width="28" height="44" viewBox="0 0 28 44">
    <circle cx="11.300" cy="19.300" r="10" fill="none" stroke="#101733" strokeWidth="2.500" />
    <path d="M18.300 26.500 26.500 35" stroke="#101733" strokeWidth="3.400" strokeLinecap="round" />
  </svg>
);

const Siri = () => (
  <svg width="32" height="32" viewBox="-16 -16 32 32">
    <circle r="15.200" fill="url(#siri)" stroke="#05051c" strokeWidth="1.800" />
    <path d="M-12-2Q-10-12 3-12 0-6-1-1Z" fill="#8a2a9c" opacity=".75" />
    <path d="M10 8Q6 13-3 13L0 1Z" fill="#1f4fae" opacity=".8" />
    <path d="M-13 4.500Q-4 0 0-.500T11-6Q5 0 2 .800L4 9Q0 5-1 1.500-8 3-13 4.500Z" fill="#6fdcea" />
    <path d="M-1 0-2-9 1.500-1 12 3.500 2 2Z" fill="#cdf2fa" />
    <path d="M1 3 4 14 0 8Z" fill="#ef5fc0" />
  </svg>
);

const ListIcon = () => (
  <svg width="36" height="44" viewBox="0 0 36 44">
    <path d="M0 14H4M8 14H36M0 22H4M8 22H30.500M0 30H4M8 30H36" stroke="#0d1430" strokeWidth="4" />
  </svg>
);

/* ---------- Data ---------- */

const menus = [
  { t: 'Chrome', w: 145.500, ls: 0.150, bold: true },
  { t: 'File', w: 81.500, ls: 0.050 },
  { t: 'Edit', w: 87, ls: 0 },
  { t: 'View', w: 99.500, ls: -0.600 },
  { t: 'History', w: 129.500, ls: -0.340 },
  { t: 'Bookmarks', w: 180.500, ls: -0.540 },
  { t: 'People', w: 126, ls: -0.350 },
  { t: 'Window', w: 139, ls: -0.900 },
  { t: 'Help', w: 70, ls: -0.100 },
];

const udacity = <SiUdacity size={31} color="#1fb3e4" stroke="#1fb3e4" strokeWidth={0.8} overflow="visible" />;

const tabs: { t: string; icon?: React.ReactNode; ls?: number; w?: number }[] = [
  { t: 'Full Stack Web', icon: udacity, ls: 0.050 },
  { t: 'Full Stack Web', icon: udacity, ls: 0.050 },
  { t: 'ud330/login', icon: <FaGithub size={33} color="#161414" />, ls: 0.100 },
  { t: 'Dictionaries', icon: <Rex />, ls: 0.050 },
  { t: 'New Tab', ls: -0.200 },
  { t: 'Forms · Bootstrap', icon: <Bootstrap />, ls: 0.110 },
  { t: 'Buttons · Bootstrap', icon: <Bootstrap />, ls: 0.250 },
  { t: 'CSS background', icon: <W3 />, ls: -0.170, w: 246 },
];

export default function App() {
  return (
    <Desktop>
      <GlobalStyle />
      <Gradients />
      <MenuBar>
        <MenuGroup>
          <AppleSlot><FaApple size={37} color="#221a33" /></AppleSlot>
          {menus.map(m => <MenuItem key={m.t} $w={m.w} $ls={m.ls} $bold={m.bold}>{m.t}</MenuItem>)}
        </MenuGroup>
        <MenuGroup>
          <DropboxSlot><FaDropbox size={42} color="#1b1a30" /></DropboxSlot>
          <StatusItem $w={32} $gap={15}><BoxStatus /></StatusItem>
          <StatusItem $w={36} $gap={20}><AirPlay /></StatusItem>
          <StatusItem $w={37} $gap={34}><TimeMachine /></StatusItem>
          <StatusItem $w={40} $gap={32}><Wifi /></StatusItem>
          <StatusItem $w={40} $gap={21}><Volume /></StatusItem>
          <StatusItem $w={48} $gap={22} $size={24} $ls={-0.800}>79%</StatusItem>
          <StatusItem $w={46} $gap={10}><Battery /></StatusItem>
          <StatusItem $w={32} $gap={30}><Flag /></StatusItem>
          <StatusItem $w={175} $gap={37} $ls={-0.350}>Wed 8:53 PM</StatusItem>
          <StatusItem $w={28} $gap={46}><Search /></StatusItem>
          <StatusItem $w={32} $gap={36}><Siri /></StatusItem>
          <StatusItem $w={36} $gap={24}><ListIcon /></StatusItem>
        </MenuGroup>
      </MenuBar>

      <MenuShade />
      <BackWindowEdge />
      <LowerLeft>You can specify extra HTML</LowerLeft>
      <LowerRight><TealDisc /></LowerRight>
      <FarRight />

      <BrowserWindow>
        <TabStrip>
          <TrafficLights>
            <Light $c="#fc605b" $b="#e2504a" />
            <Light $c="#fdbe41" $b="#dfa236" />
            <Light $c="#34c84a" $b="#2aa73b" />
          </TrafficLights>
          <Tab $active $w={250}>
            <Favicon><MdPublic size={34} color="#4d5156" /></Favicon>
            <TabTitle $w={122} $fade $ls={0.200}>localhost:5000</TabTitle>
            <CloseSlot><CloseIcon /></CloseSlot>
          </Tab>
          {tabs.map((tab, i) => (
            <Tab key={i} $w={tab.w}>
              {tab.icon && <Favicon>{tab.icon}</Favicon>}
              <TabTitle $w={tab.icon ? 121 : 160} $fade={!!tab.icon} $ls={tab.ls}>{tab.t}</TabTitle>
              <CloseSlot><CloseIcon /></CloseSlot>
              <TabDivider />
            </Tab>
          ))}
          <NewTabSlot>
            <svg width="24" height="24" viewBox="0 0 24 24"><path d="M12 0V24M0 12H24" stroke="#3e4144" strokeWidth="3.800" /></svg>
          </NewTabSlot>
        </TabStrip>

        <Toolbar>
          <ToolButton><MdArrowBack size={39} /></ToolButton>
          <ToolButton $dim><MdArrowForward size={39} /></ToolButton>
          <ToolButton><MdRefresh size={41} /></ToolButton>
          <Omnibox>
            <MdInfoOutline size={32} color="#5a5d61" />
            <Url><b>localhost</b>:5000/catalog/Cat/delete</Url>
          </Omnibox>
          <ToolbarEnd>
            <GuestBadge />
            <svg width="14" height="40" viewBox="-7 -20 14 40" fill="#5a5d61">
              <circle cy="-10" r="3.200" /><circle r="3.200" /><circle cy="10" r="3.200" />
            </svg>
          </ToolbarEnd>
        </Toolbar>

        <Navbar>
          <Brand>Catalog</Brand>
          <NavLink $w={118.500} $ls={-0.800}>Home</NavLink>
          <NavLink $w={120} $ls={-0.700}>Logout</NavLink>
        </Navbar>
        <Container>
          <Heading>Are you sure you want to delete Cat?</Heading>
          <Button $color="#da3849" $w={146} $ls={-0.560}>Delete</Button>
          <Button $color="#167efb" $w={152} $ls={-1.130}>Cancel</Button>
        </Container>
      </BrowserWindow>

      <DockBar>
        <Tile running><Finder /></Tile>
        <Tile><Launchpad /></Tile>
        <Tile running><ChromeMark /></Tile>
        <Tile><Safari /></Tile>
        <Tile><Notes /></Tile>
        <Tile><Reminders /></Tile>
        <Tile><Messages /></Tile>
        <Tile><SystemPreferences /></Tile>
        <Tile running><Word /></Tile>
        <Tile><Excel /></Tile>
        <Tile><Simulator /></Tile>
        <Tile><Xcode /></Tile>
        <Tile running><VSCode /></Tile>
        <Tile running soft><TerminalMark /></Tile>
        <Tile><News /></Tile>
        <Tile><Xcode /></Tile>
        <Divider $w={28} $h={40} />
        <Tile running><TextEdit /></Tile>
        <Tile running><AppBox /></Tile>
        <Tile running><PreviewMark /></Tile>
        <Tile running><MacDown /></Tile>
        <Divider $w={26} $h={60} />
        <Tile><Documents /></Tile>
        <Tile><MiniBrowser /></Tile>
        <Tile><MiniPreview /></Tile>
        <Tile><MiniFinder /></Tile>
        <Tile><Trash /></Tile>
      </DockBar>
    </Desktop>
  );
}
